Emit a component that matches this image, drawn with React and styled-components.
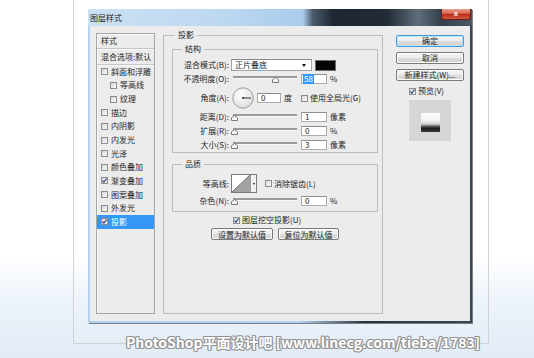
import React from 'react';
import styled, { createGlobalStyle } from 'styled-components';

const GlobalStyle = createGlobalStyle`
  html, body {
    margin: 0;
    padding: 0;
  }
  body {
    width: 534px;
    height: 358px;
    overflow: hidden;
    font-family: "Noto Sans CJK SC", "Liberation Sans", sans-serif;
    color: #1e1e1e;
  }
`;

const Page = styled.div`
  position: relative;
  width: 534px;
  height: 358px;
  box-sizing: border-box;
  padding-left: 73px;
  background: linear-gradient(to bottom, #ffffff 0, #ffffff 255px, #edf3fa 300px, #e2ecf7 358px);
`;

const Frame = styled.div`
  width: 416px;
  height: 344px;
  box-sizing: border-box;
  border: 1px solid #d2d2d2;
  border-top: none;
  padding: 9px 0 0 14px;
`;

const Dialog = styled.div`
  width: 384px;
  height: 314px;
  display: flex;
  flex-direction: column;
  box-shadow: 1px 1px 0 rgba(40, 48, 58, 0.6);
`;

const TitleBar = styled.div`
  height: 17px;
  display: flex;
  justify-content: space-between;
  align-items: flex-start;
  background: linear-gradient(to right, #cbe0f3 0%, #bdd8f1 35%, #a9ccec 56%, #4b5b6b 58.5%, #1d2631 64%, #222c37 78%, #5f6d7a 86%, #33404c 92%, #4a5764 100%);
`;

const Title = styled.span`
  font-size: 8px;
  line-height: 10px;
  margin: 4px 0 0 2px;
  color: #1b1b1b;
`;

const CloseButton = styled.div`
  width: 28px;
  height: 10px;
  margin-right: 1px;
  border: 1px solid #6b1e16;
  border-top: none;
  border-radius: 0 0 3px 3px;
  background: linear-gradient(to bottom, #e9a293 0%, #d5614c 45%, #b8301d 55%, #cf5a3f 100%);
  color: #fff;
  font: bold 8px/9px "Liberation Sans", sans-serif;
  text-align: center;
`;

const BodyFrame = styled.div`
  flex: 1;
  padding: 0 2px 2px 2px;
  background: linear-gradient(to right, #b2d3f1 0%, #b2d3f1 55%, #2b343e 72%, #3c4652 100%);
`;

const Body = styled.div`
  height: 100%;
  box-sizing: border-box;
  padding: 7px 6px 7px 6px;
  display: flex;
  align-items: stretch;
  background: #ececec;
`;

const StyleList = styled.div`
  width: 59px;
  flex-shrink: 0;
  box-sizing: border-box;
  border: 1px solid #a6a6a6;
  box-shadow: inset 1px 1px 0 #fafafa;
  font-size: 8px;
  line-height: 10px;
`;

const ListHeader = styled.div`
  height: ${p => p.h}px;
  display: flex;
  align-items: center;
  padding-left: 4px;
  border-bottom: 1px solid #c6c6c6;
  box-shadow: 0 1px 0 #fafafa;
`;

const ListItem = styled.div`
  height: 13.65px;
  display: flex;
  align-items: center;
  gap: 3px;
  padding-left: ${p => (p.indent ? 13 : 4)}px;
  background: ${p => (p.active ? '#3698f4' : 'transparent')};
  color: ${p => (p.active ? '#ffffff' : '#1e1e1e')};
`;

const Box = styled.span`
  width: 7px;
  height: 7px;
  box-sizing: border-box;
  flex-shrink: 0;
  display: inline-flex;
  align-items: center;
  justify-content: center;
  border: 1px solid #8d8d8d;
  background: linear-gradient(135deg, #d6d6d6, #fbfbfb);
`;

const Group = styled.fieldset`
  margin: ${p => p.mt || 0}px 0 0 0;
  min-width: 0;
  padding: 4px ${p => p.pr || 0}px ${p => p.pb || 0}px ${p => p.pl || 0}px;
  border: 1px solid #bcbcbc;
  display: flex;
  flex-direction: column;
`;

const MainGroup = styled(Group)`
  width: 220px;
  flex-shrink: 0;
  box-sizing: border-box;
  margin: -3px 0 0 8px;
`;

const Legend = styled.legend`
  font-size: 8px;
  line-height: 10px;
  padding: 0 3px;
  margin-left: ${p => p.ml}px;
`;

const Row = styled.div`
  height: ${p => p.h}px;
  display: flex;
  align-items: center;
  font-size: 8px;
  line-height: 10px;
  padding-left: ${p => p.pl || 0}px;
  margin-top: ${p => p.mt || 0}px;
`;

const Label = styled.span`
  width: 56px;
  flex-shrink: 0;
  text-align: right;
  margin-right: 2px;
  white-space: nowrap;
`;

const Select = styled.div`
  width: 81px;
  height: 12px;
  box-sizing: border-box;
  display: flex;
  align-items: center;
  justify-content: space-between;
  padding: 0 3px 0 3px;
  background: #fff;
  border: 1px solid #a3a3a3;
  border-top-color: #8a8a8a;
`;

const Arrow = styled.span`
  width: 0;
  height: 0;
  border-left: 2.5px solid transparent;
  border-right: 2.5px solid transparent;
  border-top: 3px solid #111;
  margin-right: 2px;
`;

const Swatch = styled.div`
  width: 21px;
  height: 11px;
  margin-left: 3px;
  box-sizing: border-box;
  background: #050505;
  border: 1px solid #6c6c6c;
`;

const SliderWrap = styled.div`
  position: relative;
  width: 64px;
  height: 12px;
  margin-left: 2px;
`;

const Track = styled.div`
  position: absolute;
  left: 0;
  right: 0;
  top: 3px;
  height: 2px;
  background: #9a9a9a;
  border-bottom: 1px solid #f8f8f8;
`;

const Thumb = styled.svg`
  position: absolute;
  top: 4px;
  margin-left: -3.5px;
`;

const Input = styled.div`
  width: ${p => p.w || 26}px;
  height: 10px;
  box-sizing: border-box;
  margin-left: ${p => p.ml || 3}px;
  padding-left: 3px;
  display: flex;
  align-items: center;
  background: #fff;
  border: 1px solid #acacac;
  border-top-color: #8c8c8c;
  font-size: 8px;
`;

const Selected = styled.span`
  background: #3399ff;
  color: #fff;
  padding: 0 1px;
  margin-left: -2px;
`;

const Unit = styled.span`
  margin-left: 3px;
`;

const Inline = styled.span`
  display: inline-flex;
  align-items: center;
  gap: 2px;
  margin-left: ${p => p.ml || 0}px;
  white-space: nowrap;
`;

const Contour = styled.div`
  width: 26px;
  height: 19px;
  box-sizing: border-box;
  display: flex;
  border: 1px solid #7b7b7b;
  background: #fff;
`;

const ContourDrop = styled.div`
  flex: 1;
  display: flex;
  align-items: center;
  justify-content: center;
  border-left: 1px solid #9a9a9a;
  background: #f2f2f2;
`;

const SmallArrow = styled(Arrow)`
  margin: 0;
  border-left-width: 1.5px;
  border-right-width: 1.5px;
  border-top-width: 2px;
`;

const Btn = styled.div`
  height: 12px;
  box-sizing: border-box;
  display: flex;
  align-items: center;
  justify-content: center;
  font-size: 8px;
  white-space: nowrap;
  border-radius: 2px;
  border: 1px solid ${p => (p.primary ? '#3c9be0' : '#7a7a7a')};
  box-shadow: inset 0 0 0 1px ${p => (p.primary ? '#bfe4fb' : '#fbfbfb')};
  background: linear-gradient(to bottom, #f6f6f6 0%, #ebebeb 48%, #dddddd 52%, #d3d3d3 100%);
  width: ${p => (p.w ? `${p.w}px` : 'auto')};
`;

const ButtonRow = styled.div`
  display: flex;
  gap: 5px;
  margin-top: 2px;
  padding-left: 39px;
`;

const SideColumn = styled.div`
  width: 68px;
  margin-left: 13px;
  display: flex;
  flex-direction: column;
  align-items: stretch;
  padding-top: 2px;
  font-size: 8px;
  line-height: 10px;
`;

const SideGap = styled.div`
  height: ${p => p.h}px;
`;

const Preview = styled.div`
  width: 42px;
  height: 41px;
  margin: 3px 0 0 13px;
  display: flex;
  align-items: center;
  justify-content: center;
  background: #d6d6d6;
`;

const PreviewSwatch = styled.div`
  width: 19px;
  height: 19px;
  margin-top: 3px;
  background: linear-gradient(to bottom, #ffffff 0%, #f0f0f0 40%, #d0d0d0 58%, #6a6a6a 68%, #1c1c1c 80%, #3a3a3a 100%);
`;

const Watermark = styled.div`
  position: absolute;
  left: 126px;
  top: 334px;
  font: bold 14px/16px "Noto Sans CJK SC", "Liberation Sans", sans-serif;
  color: #ffffff;
  letter-spacing: 0;
  white-space: nowrap;
  text-shadow: 1px 0 0 #929292, -1px 0 0 #929292, 0 1px 0 #929292, 0 -1px 0 #929292,
    1px 1px 0 #a4a4a4, -1px -1px 0 #a4a4a4, 1px -1px 0 #a4a4a4, -1px 1px 0 #a4a4a4;
`;

function CheckBox({ checked }) {
  return (
    <Box>
      {checked && (
        <svg width="5" height="5" viewBox="0 0 5 5">
          <path d="M0.4 2.6 L1.9 4.2 L4.7 0.5" stroke="#24457e" strokeWidth="1.1" fill="none" />
        </svg>
      )}
    </Box>
  );
}

function Slider({ pos }) {
  return (
    <SliderWrap>
      <Track />
      <Thumb width="7" height="6" viewBox="0 0 7 6" style={{ left: `${pos}%` }}>
        <polygon points="0.5,5.5 0.5,2.8 3.5,0.5 6.5,2.8 6.5,5.5" fill="#f6f6f6" stroke="#7a7a7a" />
      </Thumb>
    </SliderWrap>
  );
}

function Dial() {
  return (
    <svg width="22" height="22" viewBox="0 0 22 22" style={{ marginLeft: 1 }}>
      <defs>
        <radialGradient id="dialFill" cx="40%" cy="35%" r="70%">
          <stop offset="0%" stopColor="#ffffff" />
          <stop offset="100%" stopColor="#dcdcdc" />
        </radialGradient>
      </defs>
      <circle cx="11" cy="11" r="10.2" fill="url(#dialFill)" stroke="#9c9c9c" />
      <line x1="11" y1="11" x2="19" y2="11" stroke="#333" strokeWidth="1" />
      <circle cx="11" cy="11" r="1" fill="#333" />
    </svg>
  );
}

const styles = [
  { name: '斜面和浮雕' },
  { name: '等高线', indent: true },
  { name: '纹理', indent: true },
  { name: '描边' },
  { name: '内阴影' },
  { name: '内发光' },
  { name: '光泽' },
  { name: '颜色叠加' },
  { name: '渐变叠加', checked: true },
  { name: '图案叠加' },
  { name: '外发光' },
  { name: '投影', checked: true, active: true },
];

const sliders = [
  { label: '距离(D):', pos: 3, value: '1', unit: '像素' },
  { label: '扩展(R):', pos: 3, value: '0', unit: '%' },
  { label: '大小(S):', pos: 3, value: '3', unit: '像素' },
];

export default function App() {
  return (
    <Page>
      <GlobalStyle />
      <Frame>
        <Dialog>
          <TitleBar>
            <Title>图层样式</Title>
            <CloseButton>x</CloseButton>
          </TitleBar>
          <BodyFrame>
            <Body>
              <StyleList>
                <ListHeader h={14}>样式</ListHeader>
                <ListHeader h={15}>混合选项:默认</ListHeader>
                {styles.map(s => (
                  <ListItem key={s.name} indent={s.indent} active={s.active}>
                    <CheckBox checked={s.checked} />
                    <span>{s.name}</span>
                  </ListItem>
                ))}
              </StyleList>

              <MainGroup pl={8} pr={4}>
                <Legend ml={3}>投影</Legend>

                <Group pb={1}>
                  <Legend ml={9}>结构</Legend>
                  <Row h={14}>
                    <Label>混合模式(B):</Label>
                    <Select>
                      <span>正片叠底</span>
                      <Arrow />
                    </Select>
                    <Swatch />
                  </Row>
                  <Row h={14}>
                    <Label>不透明度(O):</Label>
                    <Slider pos={66} />
                    <Input ml={4}>
                      <Selected>58</Selected>
                    </Input>
                    <Unit>%</Unit>
                  </Row>
                  <Row h={24}>
                    <Label>角度(A):</Label>
                    <Dial />
                    <Input w={24} ml={3}>0</Input>
                    <Unit>度</Unit>
                    <Inline ml={9}>
                      <CheckBox />
                      <span>使用全局光(G)</span>
                    </Inline>
                  </Row>
                  {sliders.map((s, i) => (
                    <Row key={s.label} h={i === 2 ? 13 : 14}>
                      <Label>{s.label}</Label>
                      <Slider pos={s.pos} />
                      <Input ml={4}>{s.value}</Input>
                      <Unit>{s.unit}</Unit>
                    </Row>
                  ))}
                </Group>

                <Group mt={6} pb={3}>
                  <Legend ml={9}>品质</Legend>
                  <Row h={21}>
                    <Label>等高线:</Label>
                    <Contour>
                      <svg width="18" height="17" viewBox="0 0 18 17">
                        <polygon points="0,17 18,0 18,17" fill="#a3a3a3" />
                        <line x1="0" y1="17" x2="18" y2="0" stroke="#555" strokeWidth="0.8" />
                      </svg>
                      <ContourDrop>
                        <SmallArrow />
                      </ContourDrop>
                    </Contour>
                    <Inline ml={8}>
                      <CheckBox />
                      <span>消除锯齿(L)</span>
                    </Inline>
                  </Row>
                  <Row h={14}>
                    <Label>杂色(N):</Label>
                    <Slider pos={3} />
                    <Input ml={4}>0</Input>
                    <Unit>%</Unit>
                  </Row>
                </Group>

                <Row h={12} pl={61} mt={2}>
                  <Inline>
                    <CheckBox checked />
                    <span>图层挖空投影(U)</span>
                  </Inline>
                </Row>
                <ButtonRow>
                  <Btn w={62}>设置为默认值</Btn>
                  <Btn w={61}>复位为默认值</Btn>
                </ButtonRow>
              </MainGroup>

              <SideColumn>
                <Btn primary>确定</Btn>
                <SideGap h={5} />
                <Btn>取消</Btn>
                <SideGap h={5} />
                <Btn>新建样式(W)...</Btn>
                <Row h={12} pl={13} mt={4}>
                  <Inline>
                    <CheckBox checked />
                    <span>预览(V)</span>
                  </Inline>
                </Row>
                <Preview>
                  <PreviewSwatch />
                </Preview>
              </SideColumn>
            </Body>
          </BodyFrame>
        </Dialog>
      </Frame>
      <Watermark>PhotoShop平面设计吧 [www.linecg.com/tieba/1783]</Watermark>
    </Page>
  );
}
